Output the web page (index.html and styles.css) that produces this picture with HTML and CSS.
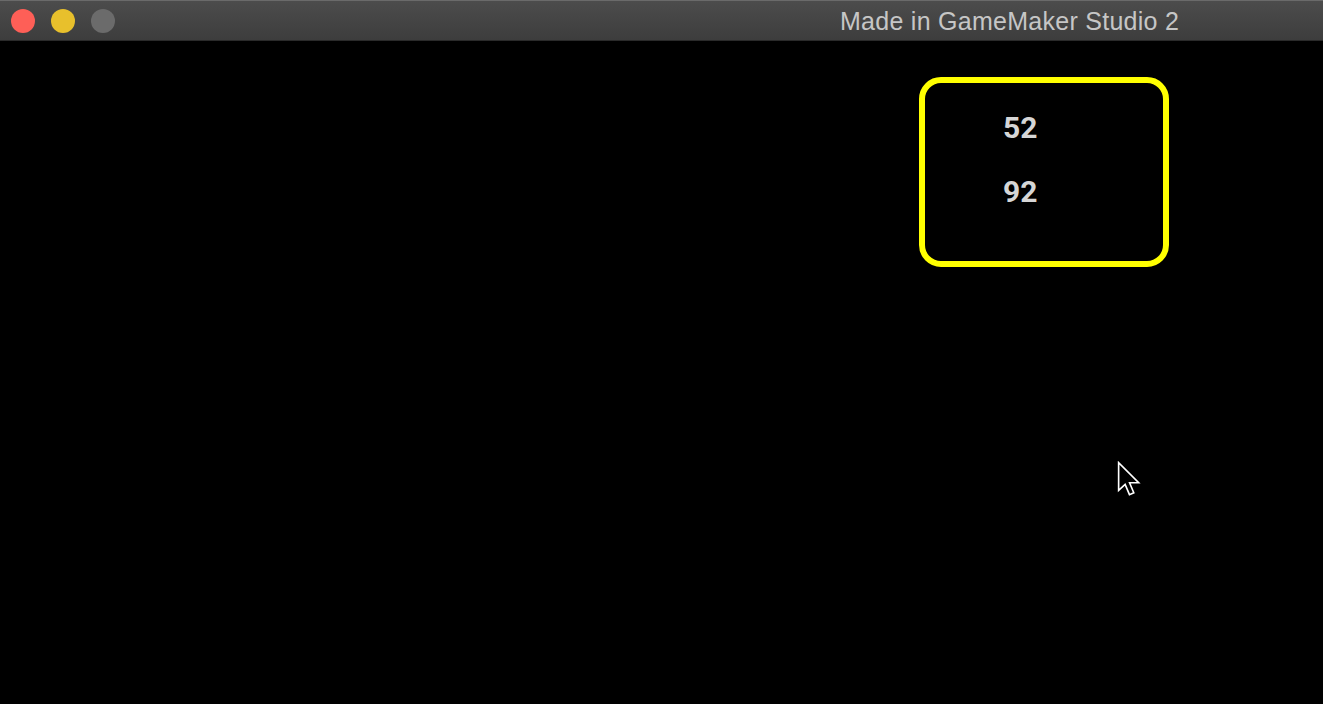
FILE: index.html
```html
<!DOCTYPE html>
<html>
<head>
<meta charset="utf-8">
<link rel="stylesheet" href="styles.css">
</head>
<body>
<div class="window">
  <div class="titlebar">
    <div class="lights">
      <span class="light red"></span>
      <span class="light yellow"></span>
      <span class="light grey"></span>
    </div>
    <div class="title">Made in GameMaker Studio 2</div>
  </div>
  <div class="canvas">
    <div class="panel">
      <div class="num">52</div>
      <div class="num">92</div>
    </div>
    <svg class="cursor" width="26" height="38" viewBox="0 0 24 35">
      <path d="M1.5 1.5 L1.5 27 L7.5 21.5 L11.5 31 L15.5 29.3 L11.6 20 L20 20 Z" fill="#000" stroke="#fff" stroke-width="1.5" stroke-linejoin="miter"/>
    </svg>
  </div>
</div>
</body>
</html>
```

FILE: styles.css
```css
html, body {
  margin: 0;
  padding: 0;
  background: #000;
}
.window {
  width: 1323px;
  height: 704px;
  display: flex;
  flex-direction: column;
  background: #000;
  overflow: hidden;
}
.titlebar {
  height: 41px;
  flex: none;
  display: flex;
  align-items: center;
  background: linear-gradient(#4c4c4c, #3d3d3d);
  border-top: 1px solid #6a6a6a;
  box-sizing: border-box;
  border-bottom: 1px solid #2a2a2a;
  position: relative;
}
.lights {
  display: flex;
  gap: 16px;
  padding-left: 11px;
}
.light {
  width: 24px;
  height: 24px;
  border-radius: 50%;
  display: block;
}
.light.red { background: #fe5f57; }
.light.yellow { background: #e8c02c; }
.light.grey { background: #6b6b6b; }
.title {
  margin-left: 725px;
  font-family: "Liberation Sans", "Helvetica", Arial, sans-serif;
  font-size: 25px;
  line-height: 28px;
  color: #c6c6c6;
  letter-spacing: 0.27px;
  margin-top: 1px;
}
.canvas {
  flex: 1;
  position: relative;
}
.panel {
  position: absolute;
  left: 919px;
  top: 36px;
  width: 250px;
  height: 190px;
  box-sizing: border-box;
  border: 6px solid #ffff00;
  border-radius: 22px;
  display: flex;
  flex-direction: column;
  gap: 33px;
  padding-top: 29px;
  padding-left: 78px;
}
.num {
  font-family: Roboto, "Liberation Sans", sans-serif;
  font-weight: 700;
  font-size: 30px;
  line-height: 31px;
  color: #d6d6d6;
}
.cursor {
  position: absolute;
  left: 1117px;
  top: 420px;
}
```
